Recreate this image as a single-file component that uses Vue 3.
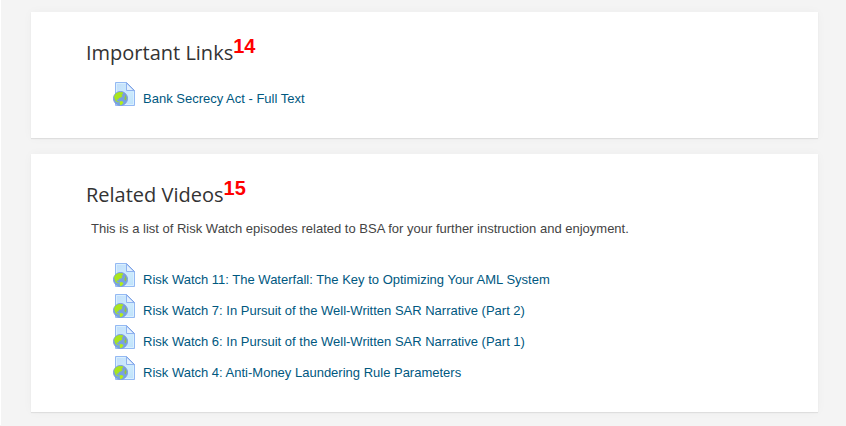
<script setup>
const sections = [
  {
    id: 'links',
    title: 'Important Links',
    marker: '14',
    intro: '',
    links: ['Bank Secrecy Act - Full Text'],
  },
  {
    id: 'videos',
    title: 'Related Videos',
    marker: '15',
    intro: 'This is a list of Risk Watch episodes related to BSA for your further instruction and enjoyment.',
    links: [
      'Risk Watch 11: The Waterfall: The Key to Optimizing Your AML System',
      'Risk Watch 7: In Pursuit of the Well-Written SAR Narrative (Part 2)',
      'Risk Watch 6: In Pursuit of the Well-Written SAR Narrative (Part 1)',
      'Risk Watch 4: Anti-Money Laundering Rule Parameters',
    ],
  },
]
</script>

<template>
  <main class="page">
    <section v-for="section in sections" :key="section.id" class="card" :aria-labelledby="section.id">
      <header class="heading">
        <h2 :id="section.id" class="title">{{ section.title }}</h2>
        <span class="marker">{{ section.marker }}</span>
      </header>
      <p v-if="section.intro" class="intro">{{ section.intro }}</p>
      <ul class="list">
        <li v-for="link in section.links" :key="link" class="item">
          <a class="link" href="#">
            <svg class="icon" viewBox="0 0 24 24" aria-hidden="true">
              <defs>
                <linearGradient id="sheet" x1="0" y1="0" x2="1" y2="1">
                  <stop offset="0" stop-color="#c2defa" />
                  <stop offset="0.6" stop-color="#cdebfd" />
                  <stop offset="1" stop-color="#bce0fa" />
                </linearGradient>
                <linearGradient id="sea" x1="0" y1="0" x2="0" y2="1">
                  <stop offset="0" stop-color="#7d9cd8" />
                  <stop offset="1" stop-color="#72a4ea" />
                </linearGradient>
              </defs>
              <path d="M3.5.5h11l8 8v15h-19z" fill="url(#sheet)" stroke="#94b9f3" />
              <path d="M4.500 22.500V1.500H13.500M21.500 10v12.500h-17" fill="none" stroke="#d9effe" />
              <path d="M14.500 1v7.500H22z" fill="#e3f0fd" stroke="#8fb2f0" stroke-linejoin="round" />
              <path d="M14.500.5l8 8" fill="none" stroke="#7fa4e6" />
              <circle cx="8.500" cy="16.500" r="7" fill="url(#sea)" stroke="#7d9bdb" />
              <path d="M2 14.500l1.800-3 3.200-1.500 3.800.2.200 1.800-1.500.5 1 1.500-1.500 1.500-2 .5-.8 1.800-1.700-.3.500 1.500 2 .8-1 .8-2.500-1.500L2.500 16z" fill="#a9e51e" />
              <path d="M7.500 19.500l2-.5 2 1-.8 1.800-1.700 1.500-1-.5z" fill="#b4ee18" />
              <path d="M13 12.500l1 1.500.5 2.500-.8 2-1-.8-.4-2 .9-1z" fill="#94c63f" />
            </svg>
            <span>{{ link }}</span>
          </a>
        </li>
      </ul>
    </section>
  </main>
</template>

<style>
body {
  margin: 0;
  background: #f4f4f4;
}
</style>

<style scoped>
.page {
  display: flex;
  flex-direction: column;
  gap: 16px;
  padding: 12px 28px 13px 30px;
  border-left: 1px solid #fff;
  font-family: "Liberation Sans", Arial, sans-serif;
  font-size: 13px;
  line-height: 20px;
  color: #444;
}

.card {
  padding: 24px 55px 30px;
  background: #fff;
  box-shadow: 0 1px 1px rgba(0, 0, 0, 0.08), 0 0 10px rgba(0, 0, 0, 0.03);
}

.heading {
  display: flex;
  align-items: flex-start;
}

.title {
  margin: 0;
  padding-top: 3px;
  font-family: "Open Sans", sans-serif;
  font-size: 20px;
  font-weight: 400;
  line-height: 28px;
  color: #333;
}

.marker {
  font-size: 20px;
  font-weight: 700;
  line-height: 20px;
  color: #f00;
}

.intro {
  margin: 10px 5px 24px;
}

.list {
  display: flex;
  flex-direction: column;
  gap: 5px;
  margin: 15px 0 0;
  padding: 0 0 0 26px;
  list-style: none;
}

.item {
  display: flex;
}

.link {
  display: flex;
  align-items: flex-start;
  gap: 7px;
  color: #00587f;
  text-decoration: none;
}

.link span {
  padding-top: 8px;
  line-height: 18px;
}

.link:hover span {
  text-decoration: underline;
}

.icon {
  flex: none;
  width: 24px;
  height: 24px;
}
</style>
